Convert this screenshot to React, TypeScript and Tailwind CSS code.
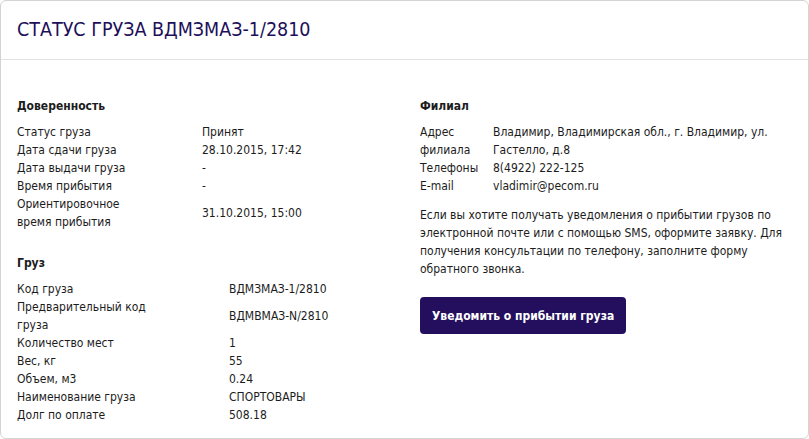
const trust = [
  { label: "Статус груза", value: "Принят" },
  { label: "Дата сдачи груза", value: "28.10.2015, 17:42" },
  { label: "Дата выдачи груза", value: "-" },
  { label: "Время прибытия", value: "-" },
  { label: "Ориентировочное время прибытия", value: "31.10.2015, 15:00" },
];

const cargo = [
  { label: "Код груза", value: "ВДМЗМАЗ-1/2810" },
  { label: "Предварительный код груза", value: "ВДМВМАЗ-N/2810" },
  { label: "Количество мест", value: "1" },
  { label: "Вес, кг", value: "55" },
  { label: "Объем, м3", value: "0.24" },
  { label: "Наименование груза", value: "СПОРТОВАРЫ" },
  { label: "Долг по оплате", value: "508.18" },
];

const branch = [
  { label: "Адрес филиала", value: "Владимир, Владимирская обл., г. Владимир, ул. Гастелло, д.8" },
  { label: "Телефоны", value: "8(4922) 222-125" },
  { label: "E-mail", value: "vladimir@pecom.ru" },
];

function InfoTable({
  rows,
  labelWidth,
  labelMax,
}: {
  rows: { label: string; value: string }[];
  labelWidth: string;
  labelMax?: string;
}) {
  return (
    <div className="flex flex-col">
      {rows.map((row) => (
        <div key={row.label} className="flex items-center">
          <div className={labelWidth}>
            <div className={labelMax}>{row.label}</div>
          </div>
          <div className="flex-1">{row.value}</div>
        </div>
      ))}
    </div>
  );
}

export default function App() {
  return (
    <div
      className="w-[809px] h-[439px] bg-white text-[12px] leading-[18px] text-[#1c1c1c]"
      style={{ fontFamily: '"DejaVu Sans Condensed", "DejaVu Sans", sans-serif' }}
    >
      <div className="h-full border border-[#d3d3d3] rounded-[6px] flex flex-col">
        {/* Header */}
        <div className="h-[59px] px-4 flex items-center border-b border-[#e2e2e2]">
          <h1 className="text-[19.5px] text-[#1e0f5a]">
            СТАТУС ГРУЗА ВДМЗМАЗ-1/2810
          </h1>
        </div>

        <div className="flex pl-4 pt-[37px]">
          {/* Left */}
          <div className="w-[403px] shrink-0">
            <h2 className="font-bold mb-2">Доверенность</h2>
            <InfoTable rows={trust} labelWidth="w-[185px]" labelMax="max-w-[136px]" />

            <h2 className="font-bold mt-[23px] mb-2">Груз</h2>
            <InfoTable rows={cargo} labelWidth="w-[212px]" labelMax="max-w-[136px]" />
          </div>

          {/* Right */}
          <div className="flex-1 pr-4">
            <h2 className="font-bold mb-2">Филиал</h2>
            <div className="flex flex-col">
              {branch.map((row) => (
                <div key={row.label} className="flex">
                  <div className="w-[73px] shrink-0">{row.label}</div>
                  <div className="flex-1">{row.value}</div>
                </div>
              ))}
            </div>

            <p className="mt-[11px]">
              Если вы хотите получать уведомления о прибытии грузов по электронной почте или
              с помощью SMS, оформите заявку. Для получения консультации по телефону,
              заполните форму обратного звонка.
            </p>

            <button className="mt-[19px] h-[37px] px-[12px] rounded-[4px] bg-[#230f5e] text-white font-bold text-[12px]">
              Уведомить о прибытии груза
            </button>
          </div>
        </div>
      </div>
    </div>
  );
}
